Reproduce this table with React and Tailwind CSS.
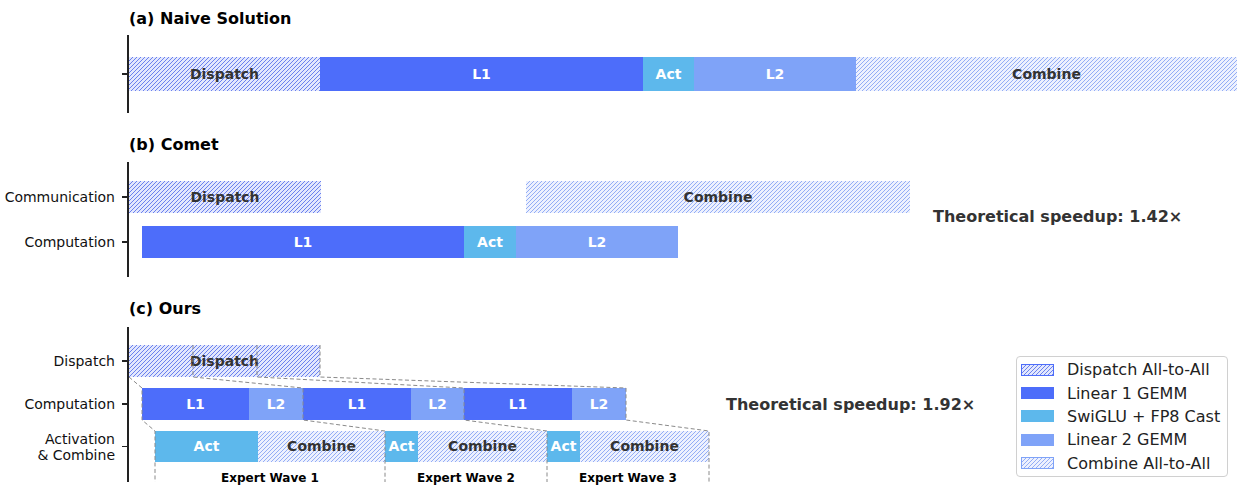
import React from 'react';

const KIND = {
  l1: 'bg-[#4d6dfa] text-white',
  act: 'bg-[#5db8ec] text-white',
  l2: 'bg-[#7fa3f8] text-white',
  dispatch:
    'bg-[#e2e7fd] bg-[linear-gradient(135deg,#6a80ee_0_9%,transparent_9%_41%,#6a80ee_41%_59%,transparent_59%_91%,#6a80ee_91%)] bg-[length:4px_4px] text-[#333]',
  combine:
    'bg-[#edf1fe] bg-[linear-gradient(135deg,#93adf6_0_9%,transparent_9%_41%,#93adf6_41%_59%,transparent_59%_91%,#93adf6_91%)] bg-[length:4px_4px] text-[#333]',
};

const naive = [
  { w: 'w-[191px]', k: 'dispatch', t: 'Dispatch' },
  { w: 'w-[323px]', k: 'l1', t: 'L1' },
  { w: 'w-[51px]', k: 'act', t: 'Act' },
  { w: 'w-[162px]', k: 'l2', t: 'L2' },
  { w: 'w-[381px]', k: 'combine', t: 'Combine' },
];

const cometComm = [
  { w: 'w-[192px]', k: 'dispatch', t: 'Dispatch' },
  { w: 'w-[384px]', k: 'combine', t: 'Combine', ml: 'ml-[205px]' },
];

const cometComp = [
  { w: 'w-[322px]', k: 'l1', t: 'L1', ml: 'ml-[13px]' },
  { w: 'w-[52px]', k: 'act', t: 'Act' },
  { w: 'w-[162px]', k: 'l2', t: 'L2' },
];

const oursDispatch = [{ w: 'w-[191px]', k: 'dispatch', t: 'Dispatch' }];

const oursComp = [
  { w: 'w-[107px]', k: 'l1', t: 'L1', ml: 'ml-[13px]' },
  { w: 'w-[54px]', k: 'l2', t: 'L2' },
  { w: 'w-[108px]', k: 'l1', t: 'L1' },
  { w: 'w-[53px]', k: 'l2', t: 'L2' },
  { w: 'w-[108px]', k: 'l1', t: 'L1' },
  { w: 'w-[54px]', k: 'l2', t: 'L2' },
];

const oursAct = [
  { w: 'w-[103px]', k: 'act', t: 'Act', ml: 'ml-[26px]' },
  { w: 'w-[127px]', k: 'combine', t: 'Combine' },
  { w: 'w-[33px]', k: 'act', t: 'Act' },
  { w: 'w-[129px]', k: 'combine', t: 'Combine' },
  { w: 'w-[33px]', k: 'act', t: 'Act' },
  { w: 'w-[129px]', k: 'combine', t: 'Combine' },
];

const legend = [
  { k: 'dispatch', t: 'Dispatch All-to-All', edge: 'border border-[#4d6dfa]' },
  { k: 'l1', t: 'Linear 1 GEMM' },
  { k: 'act', t: 'SwiGLU + FP8 Cast' },
  { k: 'l2', t: 'Linear 2 GEMM' },
  { k: 'combine', t: 'Combine All-to-All', edge: 'border border-[#7fa3f8]' },
];

// dashed outlines tying each expert wave together across the three rows of (c)
const waves = [
  'M129 377 L142 388 L142 420 L155 431 L155 482',
  'M193 345 L193 377 L303 388 L303 420 L385 431 L385 482',
  'M257 345 L257 377 L464 388 L464 420 L547 431 L547 482',
  'M320 345 L320 377 L626 388 L626 420 L709 431 L709 482',
];

const BarRow = ({ bars, h }) => (
  <div className={`flex ${h}`}>
    {bars.map((b, i) => (
      <div
        key={i}
        className={`${b.w} ${b.ml || ''} ${KIND[b.k]} shrink-0 h-full flex items-center justify-center text-[14px] font-bold`}
      >
        {b.t}
      </div>
    ))}
  </div>
);

const RowLabel = ({ h, children }) => (
  <div className={`flex items-center justify-end ${h}`}>
    <span className="mr-[7px] text-[14px] leading-[16px] text-right text-[#111]">{children}</span>
    <span className="w-[5px] h-[1.5px] bg-[#222]" />
  </div>
);

const Title = ({ className, children }) => (
  <h2 className={`pl-[129px] text-[16px] leading-[19px] font-bold text-black ${className}`}>{children}</h2>
);

export default function App() {
  return (
    <div className="relative w-[1237px] h-[487px] overflow-hidden bg-white font-['DejaVu_Sans','Liberation_Sans',sans-serif]">
      <Title className="pt-[9px]">(a) Naive Solution</Title>
      <div className="flex mt-[7px]">
        <div className="w-[127px] flex flex-col pt-[22px]">
          <RowLabel h="h-[34px]" />
        </div>
        <div className="flex-1 border-l-2 border-[#222] pt-[22px] pb-[22px]">
          <BarRow bars={naive} h="h-[34px]" />
        </div>
      </div>

      <Title className="mt-[22px]">(b) Comet</Title>
      <div className="flex mt-[8px]">
        <div className="w-[127px] flex flex-col gap-[13px] pt-[19px]">
          <RowLabel h="h-[32px]">Communication</RowLabel>
          <RowLabel h="h-[32px]">Computation</RowLabel>
        </div>
        <div className="w-[806px] border-l-2 border-[#222] flex flex-col gap-[13px] pt-[19px] pb-[19px]">
          <BarRow bars={cometComm} h="h-[32px]" />
          <BarRow bars={cometComp} h="h-[32px]" />
        </div>
        <p className="self-start mt-[45px] text-[16px] leading-[19px] font-bold text-[#333] whitespace-nowrap">
          Theoretical speedup: 1.42×
        </p>
      </div>

      <Title className="mt-[22px]">(c) Ours</Title>
      <div className="flex mt-[9px]">
        <div className="w-[127px] flex flex-col gap-[11px] pt-[18px]">
          <RowLabel h="h-[32px]">Dispatch</RowLabel>
          <RowLabel h="h-[32px]">Computation</RowLabel>
          <RowLabel h="h-[31px]">
            Activation
            <br />& Combine
          </RowLabel>
        </div>
        <div className="w-[599px] border-l-2 border-[#222] flex flex-col gap-[11px] pt-[18px]">
          <BarRow bars={oursDispatch} h="h-[32px]" />
          <BarRow bars={oursComp} h="h-[32px]" />
          <BarRow bars={oursAct} h="h-[31px]" />
          <div className="flex h-[20px] pl-[26px] -mt-[11px]">
            {['w-[230px]', 'w-[162px]', 'w-[162px]'].map((w, i) => (
              <div key={i} className={`${w} shrink-0 text-center text-[12px] leading-[14px] font-bold text-black whitespace-nowrap pt-[9px]`}>
                {`Expert Wave ${i + 1}`}
              </div>
            ))}
          </div>
        </div>
        <p className="self-start mt-[68px] text-[16px] leading-[19px] font-bold text-[#333] whitespace-nowrap">
          Theoretical speedup: 1.92×
        </p>
        <div className="self-start ml-auto mr-[9px] mt-[29px] w-[212px] border border-[#d0d0d0] rounded-[4px] px-[4px] py-[1px] flex flex-col">
          {legend.map((l) => (
            <div key={l.t} className="flex items-center gap-[13px] h-[23.4px]">
              <span className={`w-[33px] h-[12px] shrink-0 ${KIND[l.k]} ${l.edge || ''}`} />
              <span className="text-[16px] leading-[19px] text-[#222] whitespace-nowrap">{l.t}</span>
            </div>
          ))}
        </div>
      </div>

      <svg className="absolute inset-0 pointer-events-none" width="1237" height="487" viewBox="0 0 1237 487">
        {waves.map((d, i) => (
          <path key={i} d={d} fill="none" stroke="#8a8a8a" strokeWidth="1" strokeDasharray="4 2.5" />
        ))}
      </svg>
    </div>
  );
}
